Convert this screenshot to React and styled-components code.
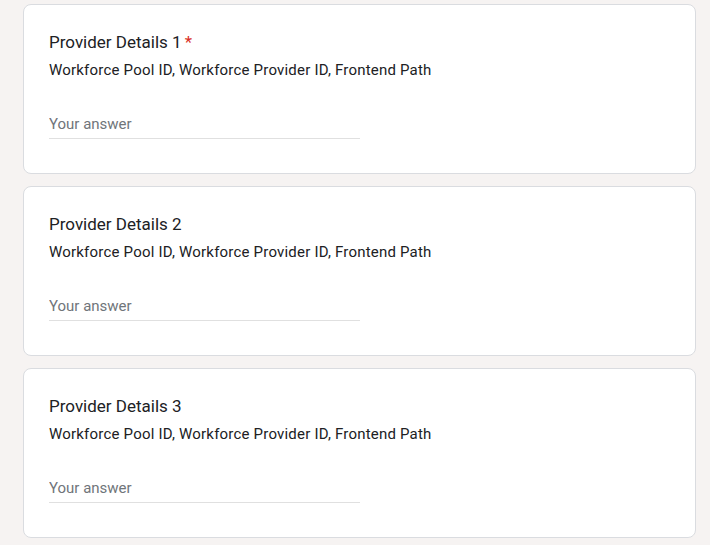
import styled, { createGlobalStyle } from 'styled-components';

const GlobalStyle = createGlobalStyle`
  html, body {
    margin: 0;
    padding: 0;
    background: #f6f3f2;
  }

  body {
    font-family: Roboto, Arial, sans-serif;
    color: #202124;
  }
`;

const Page = styled.div`
  display: flex;
  flex-direction: column;
  gap: 12px;
  padding: 4px 14px 0 23px;
`;

const Card = styled.div`
  background: #fff;
  border: 1px solid #dadce0;
  border-radius: 8px;
  padding: 24px 24px 0 25px;
  box-sizing: border-box;
  height: 170px;
`;

const Title = styled.div`
  font-size: 17px;
  line-height: 26px;
  color: #202124;
`;

const Required = styled.span`
  color: #d93025;
  margin-left: 3px;
`;

const Description = styled.div`
  margin-top: 4px;
  font-size: 15px;
  line-height: 22px;
  letter-spacing: 0.2px;
  color: #202124;
`;

const AnswerInput = styled.input`
  display: block;
  margin-top: 33px;
  width: 311px;
  box-sizing: border-box;
  border: none;
  border-bottom: 1px solid #e0e0e0;
  padding: 0 0 4px;
  font-family: Roboto, Arial, sans-serif;
  font-size: 15px;
  line-height: 20px;
  color: #202124;
  background: transparent;
  outline: none;

  &::placeholder {
    color: #70757a;
  }
`;

const questions = [
  { id: 1, title: 'Provider Details 1', required: true },
  { id: 2, title: 'Provider Details 2', required: false },
  { id: 3, title: 'Provider Details 3', required: false },
];

const App = () => {
  return (
    <>
      <GlobalStyle />
      <Page>
        {questions.map(({ id, title, required }) => (
          <Card key={id}>
            <Title>
              {title}
              {required && <Required>*</Required>}
            </Title>
            <Description>Workforce Pool ID, Workforce Provider ID, Frontend Path</Description>
            <AnswerInput placeholder="Your answer" />
          </Card>
        ))}
      </Page>
    </>
  );
};

export default App;
